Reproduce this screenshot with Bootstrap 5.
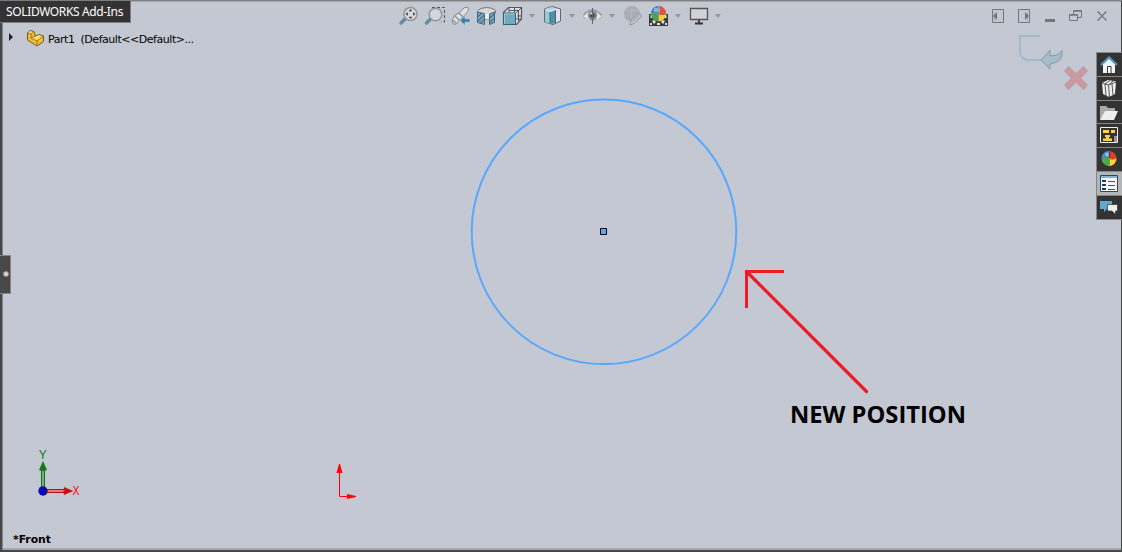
<!DOCTYPE html>
<html lang="en">
<head>
<meta charset="utf-8">
<meta name="viewport" content="width=device-width, initial-scale=1">
<title>Part1</title>
<link href="https://cdn.jsdelivr.net/npm/bootstrap@5.3.0/dist/css/bootstrap.min.css" rel="stylesheet">
<style>
  body{font-family:"Noto Sans","Open Sans",sans-serif;background:#c4c8d3;color:#000}
  .stage{width:1122px;height:552px;background:#c4c8d3}
  .stage svg{display:block;flex:none}
  .drawing{inset:0}
  .topbar{height:30px}
  .addins{width:131px;height:23px;background:#333;border:1px solid #7c7c7c;border-left:0;color:#fff;font-size:12px;line-height:22px;padding-left:6px;white-space:nowrap;letter-spacing:-.36px}
  .tools{margin-left:267px;padding-top:5px;height:27px}
  .tool{width:22px;height:22px}
  .drop{width:0;height:0;border:3px solid transparent;border-top:4px solid #94979f;border-bottom:0;margin-top:9px}
  .gap-before{margin-left:5px}
  .gap-after{margin-left:7px}
  .winbtns{margin-left:auto;padding:7px 11px 0 0}
  .tree{padding:0 0 0 8px;height:20px;font:11px "DejaVu Sans",sans-serif}
  .particon{margin-left:13px}
  .treetext{white-space:pre;margin-left:3px;line-height:19px;letter-spacing:-.46px}
  .taskpane{width:26px;margin-top:22px;background:#858585;padding:1px 0 1px 1px;gap:1px;height:168px}
  .taskcell{width:25px;flex:1 1 0;background:#333}
  .taskcell.current{background:#b4b5b8}
</style>
</head>
<body>
<main class="stage position-relative overflow-hidden">
  <svg class="drawing position-absolute" width="1122" height="552" viewBox="0 0 1122 552">
    <path d="M0 .5H1122" stroke="#828282" stroke-width="2"/>
    <path d="M0 1H2V552H0Z" fill="#484848"/><path d="M2.500 1V550" stroke="#858585"/>
    <path d="M2 549H1121" stroke="#858585"/>
    <path d="M0 550H1122V552H0ZM1121 1H1122V552H1121Z" fill="#484848"/>
    <path d="M0 255.500H10.500V293.500H0" fill="#484848" stroke="#858585"/>
    <circle cx="6" cy="274" r="2.700" fill="#bbb"/><circle cx="6" cy="274" r="1.300" fill="#ddd"/>
    <circle cx="604" cy="231.800" r="132.300" fill="none" stroke="#57a8ff" stroke-width="2"/>
    <path d="M600.500 228.500H606.500V234.500H600.500Z" fill="#57a8ff" stroke="#000"/>
    <g fill="none" stroke="#ed1c24" stroke-width="3"><path d="M784 271.500H746.500V308"/><path d="M747 272L866.500 391.500" stroke-width="3.200" stroke-linecap="round"/></g>
    <text x="790" y="423" textLength="176" lengthAdjust="spacingAndGlyphs" font-family="Open Sans,Noto Sans,sans-serif" font-weight="700" font-size="23.500">NEW POSITION</text>
    <!-- view triad -->
    <path d="M41.500 468H44.500V488H41.500Z" fill="#6cb573" stroke="#1d6b20"/><path d="M43 461L47 470Q43 472 39 470Z" fill="#1a751c"/>
    <path d="M46 489.500H66V492.500H46Z" fill="#ed7878" stroke="#aa1717"/><path d="M64 487L73.500 491L64 495Q63 491 64 487Z" fill="#c51515"/>
    <circle cx="43" cy="491" r="4.700" fill="#10108a"/>
    <text x="39" y="493" font-family="Liberation Sans,sans-serif" font-size="9" fill="#00f">Z</text>
    <g font-family="Liberation Sans,sans-serif" font-size="12"><text x="38.700" y="459" fill="#078000">Y</text><text x="72.500" y="495" textLength="7" lengthAdjust="spacingAndGlyphs" fill="#f00">X</text></g>
    <text x="13" y="543" textLength="38" lengthAdjust="spacingAndGlyphs" font-family="DejaVu Sans,sans-serif" font-weight="700" font-size="11">*Front</text>
    <!-- sketch origin -->
    <path d="M339.500 472V496.500H349" stroke="red" fill="none"/><path d="M339 464H340L342.500 473H336.500ZM356 496V497L347 499V494Z" fill="red"/>
    <!-- confirmation corner -->
    <path d="M1040 36H1020V51Q1020 60 1029 60H1041" fill="none" stroke="#a3b9cb" stroke-width="2"/>
    <path d="M1041 60L1050 50.500V56Q1059 56 1062 50.500Q1064 62 1050 64V69Z" fill="#a5bdcb" stroke="#8299a8"/>
    <path d="M1068.500 67L1076 74L1083.500 67L1087 71L1080 78L1087 85L1083.500 89L1076 82L1068.500 89L1065 85L1072 78L1065 71Z" fill="#cb999f" stroke="#c29ba2" stroke-width="1.500" stroke-linejoin="round"/>
  </svg>

  <header class="topbar position-relative d-flex align-items-start">
    <div class="addins">SOLIDWORKS Add-Ins</div>
    <nav class="tools d-flex align-items-start" aria-label="View">
      <svg class="tool" viewBox="0 0 22 22"><path d="M3 18L8 13" stroke="#638ca6" stroke-width="3.500" stroke-linecap="round"/><circle cx="12.500" cy="9" r="6.500" fill="#d7dce0" stroke="#92969b" stroke-width="1.500"/><path d="M12.500 4L14.500 6.300H10.500ZM12.500 14L14.500 11.700H10.500ZM7.500 9L9.800 7V11ZM17.500 9L15.200 7V11Z" fill="#444"/></svg>
      <svg class="tool ms-1" viewBox="0 0 22 22"><path d="M8 2.500H20.500V17H17" fill="none" stroke="#555" stroke-dasharray="3 2"/><path d="M2.500 18L7 13.500" stroke="#638ca6" stroke-width="3.500" stroke-linecap="round"/><circle cx="11.500" cy="9.500" r="6.300" fill="#d0d7df" stroke="#92969b" stroke-width="1.500"/></svg>
      <svg class="tool ms-1" viewBox="0 0 22 22"><path d="M2 15L4.500 10.500L9 8L14.500 2.500L18 2.500L18.500 5.500L13 12L10.500 14L6 19H3Z" fill="#dedfe1" stroke="#888c91"/><path d="M4.500 10.500L9 15M9 8L13 12M3 15L6 18" stroke="#8d9196" stroke-width="1.200"/><path d="M10 15.500L15 10.500V13.800H20V17.200H15V20.500Z" fill="#397fa5" stroke="#c6d6df" stroke-width=".7"/></svg>
      <svg class="tool ms-1" viewBox="0 0 22 22"><path d="M1.500 6Q4 2.500 10.500 2.500T19.500 5.500V8L14 9V14H9V9L1.500 7Z" fill="#d7d8da" stroke="#777"/><path d="M9 9V14H14V9" fill="#eee"/><path d="M1.500 7L8.500 9V19.500L1.500 17.500ZM13.500 9L18.500 7V17.500L13.500 19.500Z" fill="#76aac3" stroke="#496777"/><path d="M2 11.500L5.500 8.500M2 16L8 10.500M4.500 18L8 14.500M14 13L18 9M14 17.500L18 13.500" stroke="#24536b"/></svg>
      <svg class="tool ms-1" viewBox="0 0 22 22"><path d="M1.500 7.500L6.500 2.500H19.500V14L14.500 19.500H1.500Z" fill="#dde0e4" stroke="#555" stroke-width="1.200"/><path d="M7 2.500V7.500M14 8L19.500 2.500M12.500 2.500V7.500M7 5.500H16.500V16M15 11H19.500M14 14H19" stroke="#555" fill="none"/><path d="M1.500 8H13.500V19.500H1.500Z" fill="#74aac1" stroke="#315f76"/><path d="M2.500 18.500V9H13" fill="none" stroke="#9bc9dc"/></svg>
      <span class="drop gap-before"></span>
      <svg class="tool gap-after" viewBox="0 0 22 22"><path d="M2.500 4L10 1.500L18.500 4V16L11 19.500L2.500 17Z" fill="#e1e5e9" stroke="#666"/><path d="M3 5L8 7V18.500L3 17Z" fill="#9bc8d9"/><path d="M8 7L13.500 5.500V18L10 19L8 18Z" fill="#4b90af"/><path d="M3 4L10 2L14 4L8 6Z" fill="#b5d6e3"/><path d="M8 7V18.500M13.500 5V18" stroke="#466675"/></svg>
      <span class="drop gap-before"></span>
      <svg class="tool gap-after" viewBox="0 0 22 22"><path d="M1 11.500Q10.500 0 20 11.500Q10.500 20 1 11.500Z" fill="#e9e9eb" stroke="#b0b1b5"/><path d="M1.500 10Q10.500 0 19.500 10" stroke="#999ba0" fill="none" stroke-width="1.300"/><circle cx="10.500" cy="10.500" r="4.700" fill="#85868a"/><circle cx="10.500" cy="10.500" r="2.300" fill="#444"/><circle cx="9" cy="8.500" r="1.100" fill="#ddd"/><path d="M10.500 3V19" stroke="#66686c"/></svg>
      <span class="drop gap-before"></span>
      <svg class="tool gap-after" viewBox="0 0 22 22"><circle cx="10" cy="9" r="8" fill="#aaadb5"/><path d="M3 5Q9 7 17 5M10 1Q8 8 11 17" fill="none" stroke="#b7bac2"/><path d="M8 20L9 15.500L17 8L20 11L12 18.500Z" fill="#c5c7cc" stroke="#92959d"/><path d="M10.500 16.500L18 9.500" stroke="#999ca3"/></svg>
      <svg class="tool ms-1" viewBox="0 0 22 22"><path d="M1 9H20V21H1Z" fill="#3b3b3b"/><path d="M2.500 10H4V13H2.500ZM17 10H18.500V13H17ZM4 16L6 15L8 17L6 19ZM17 16L15 15L13 17L15 19ZM9 18H12V20H9ZM2 18H4V20H2ZM17 18H19V20H17Z" fill="#e4e4e4"/><path d="M10.500 1A7.500 7.500 0 0 0 3 9Q7 7 10.500 9Z" fill="#3d82c6"/><path d="M10.500 1A7.500 7.500 0 0 1 18 9Q14 11 10.500 9Q13 5 10.500 1Z" fill="#db5442"/><path d="M3 9Q7 7 10.500 9V16.500A7.500 7.500 0 0 1 3 9Z" fill="#4ba353"/><path d="M10.500 9Q14 11 18 9A7.500 7.500 0 0 1 10.500 16.500Z" fill="#f0cf41"/><circle cx="8" cy="5" r="2.300" fill="#fff" opacity=".4"/></svg>
      <span class="drop gap-before"></span>
      <svg class="tool gap-after" viewBox="0 0 22 22"><path d="M2.500 3.500H19.500V14.500H2.500Z" fill="#d2d3d6" stroke="#555" stroke-width="1.300"/><path d="M11 15V18M7 18.500H15" stroke="#333" stroke-width="1.800"/></svg>
      <span class="drop gap-before"></span>
    </nav>
    <nav class="winbtns" aria-label="Window">
      <svg width="122" height="18" viewBox="989 7 122 18"><g fill="none" stroke="#73767d"><path d="M992.500 9.500H1003.500V22.500H992.500ZM1018.500 9.500H1029.500V22.500H1018.500Z"/><path d="M994.500 12V21M1027.500 12V21" stroke="#b0b2b9"/><path d="M1073.500 14V10.500H1081.500V17.500H1078M1069.500 14.500H1077.500V20.500H1069.500Z"/><path d="M1074 11H1081M1070 15H1077" stroke-width="1.500"/><path d="M1097.500 11.500L1106.500 20.500M1106.500 11.500L1097.500 20.500" stroke-width="1.300"/></g><path d="M993 16L997 12V20ZM1029 16L1025 12V20ZM1045 19H1055V22H1045Z" fill="#73767d"/></svg>
    </nav>
  </header>

  <section class="position-relative d-flex align-items-start">
    <div class="tree d-flex">
      <svg width="5" height="16" viewBox="0 0 5 16"><path d="M1 3L5 7L1 11Z" fill="#222"/></svg>
      <svg class="particon" width="19" height="17" viewBox="0 0 19 17"><path d="M1.500 3L4 .5L8 1.500L9.500 6L13 4.500L17.500 6V11.500L11 16L1.500 10Z" fill="#f2bc34" stroke="#715b24"/><path d="M1.500 3L5 4V8L11 11V16M11 11L17.500 6M5 4L8 1.500M5 8L9.500 6" fill="none" stroke="#8b6d20" stroke-width=".8"/><path d="M2.500 3L4 1.200L7 2L5 3.300ZM6.500 8L9.500 6.700L13 5.200L16 6.300L11 10Z" fill="#ffe274"/></svg>
      <div class="treetext">Part1  (Default&lt;&lt;Default&gt;...</div>
    </div>
    <aside class="taskpane d-flex flex-column ms-auto">
      <div class="taskcell"><svg width="24" height="22" viewBox="0 0 24 22"><path d="M6 11L12 5L18 11V20H6Z" fill="#f3f3f3"/><path d="M4 12L12 4.500L20 12" stroke="#4c9dcc" stroke-width="2.300" fill="none"/><path d="M10.500 20V13.500H14V20" stroke="#333" fill="#fff"/></svg></div>
      <div class="taskcell"><svg width="24" height="22" viewBox="0 1 24 22"><path d="M5 7L11 4L19 5.500L18 18L12 21L6 18Z" fill="#eee"/><path d="M9 20L8 8L13 4.500M12.500 21L11.500 9L16 5M5 7L11.500 9L19 6M16 19L15 8" stroke="#444" stroke-width=".9" fill="none"/></svg></div>
      <div class="taskcell"><svg width="24" height="22" viewBox="0 1 24 22"><path d="M3 19V6H9L11 8H18V11L14 20H3Z" fill="#aaa"/><path d="M3 20L8 11H21L17 20Z" fill="#eee"/></svg></div>
      <div class="taskcell"><svg width="24" height="22" viewBox="0 1 24 22"><path d="M3.500 4.500H20.500V19.500H3.500Z" fill="#333" stroke="#eee"/><path d="M6 7H12V10H6ZM14 7H18V10H14ZM8 12H13V14H12V15.500H15V18H6V15.500H9V14H8Z" fill="#ffd050"/><path d="M17 13H20V19H17Z" fill="#999"/></svg></div>
      <div class="taskcell"><svg width="24" height="22" viewBox="0 1 24 22"><path d="M12 4A7.500 7.500 0 0 0 4.500 12Q8 9 12 11Z" fill="#468fd2"/><path d="M12 4A7.500 7.500 0 0 1 19.500 11Q15 14 12 11Q14 8 12 4Z" fill="#df3e2a"/><path d="M4.500 12Q8 9 12 11Q14 15 12 19A7.500 7.500 0 0 1 4.500 12Z" fill="#4eaa43"/><path d="M12 11Q15 14 19.500 11A7.500 7.500 0 0 1 12 19Q14 15 12 11Z" fill="#ffd43c"/><circle cx="10" cy="7.500" r="2" fill="#fff" opacity=".4"/></svg></div>
      <div class="taskcell current"><svg width="24" height="23" viewBox="0 0 24 23"><path d="M3.500 3.500H20.500V19.500H3.500Z" fill="#fafafa" stroke="#1d4c68"/><path d="M4 5H20" stroke="#7bb7d2" stroke-width="2"/><path d="M5 8H9V10H5ZM5 12H9V14H5ZM5 16H9V18H5Z" fill="#173f57"/><path d="M11 9.500H18M11 13.500H18M11 17.500H18" stroke="#315568"/></svg></div>
      <div class="taskcell"><svg width="24" height="22" viewBox="0 1 24 22"><path d="M3 6H15V14H10L7 17V14H3Z" fill="#61a8cb"/><path d="M10.500 9.500H20.500V16H18.500V19.500L15 16H10.500Z" fill="#eee" stroke="#333" stroke-width=".7"/></svg></div>
    </aside>
  </section>
</main>
<script src="https://cdn.jsdelivr.net/npm/bootstrap@5.3.0/dist/js/bootstrap.bundle.min.js"></script>
</body>
</html>
